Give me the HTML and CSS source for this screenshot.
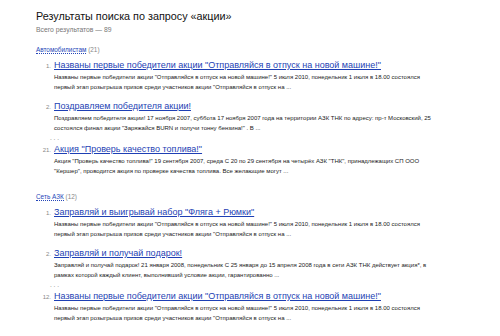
FILE: index.html
```html
<!DOCTYPE html>
<html lang="ru">

<head>
  <meta charset="UTF-8">
  <meta name="viewport" content="width=device-width, initial-scale=1.0">
  <title>Результаты поиска</title>
  <link rel="stylesheet" href="styles.css">
</head>

<body>
  <div class="search-page">
    <h1>Результаты поиска по запросу «акции»</h1>
    <p class="total">Всего результатов — 89</p>

    <div class="section">
      <div class="section-head"><a href="#">Автомобилистам</a> <span class="count">(21)</span></div>
      <ol class="results">
        <li class="result">
          <span class="num">1.</span>
          <div class="body">
            <a class="result-title" href="#">Названы первые победители акции "Отправляйся в отпуск на новой машине!"</a>
            <p class="snippet">Названы первые победители акции "Отправляйся в отпуск на новой машине!" 5 июля 2010, понедельник 1 июля в 18.00 состоялся первый этап розыгрыша призов среди участников акции "Отправляйся в отпуск на ...</p>
          </div>
        </li>
        <li class="result">
          <span class="num">2.</span>
          <div class="body">
            <a class="result-title" href="#">Поздравляем победителя акции!</a>
            <p class="snippet">Поздравляем победителя акции! 17 ноября 2007, суббота 17 ноября 2007 года на территории АЗК ТНК по адресу: пр-т Московский, 25 состоялся финал акции "Заряжайся BURN и получи тонну бензина!" . В ...</p>
          </div>
        </li>
        <li class="gap">. . .</li>
        <li class="result">
          <span class="num">21.</span>
          <div class="body">
            <a class="result-title" href="#">Акция "Проверь качество топлива!"</a>
            <p class="snippet">Акция "Проверь качество топлива!" 19 сентября 2007, среда С 20 по 29 сентября на четырёх АЗК "ТНК", принадлежащих СП ООО "Кершер", проводится акция по проверке качества топлива. Все желающие могут ...</p>
          </div>
        </li>
      </ol>
    </div>

    <div class="section">
      <div class="section-head"><a href="#">Сеть АЗК</a> <span class="count">(12)</span></div>
      <ol class="results">
        <li class="result">
          <span class="num">1.</span>
          <div class="body">
            <a class="result-title" href="#">Заправляй и выигрывай набор "Фляга + Рюмки"</a>
            <p class="snippet">Названы первые победители акции "Отправляйся в отпуск на новой машине!" 5 июля 2010, понедельник 1 июля в 18.00 состоялся первый этап розыгрыша призов среди участников акции "Отправляйся в отпуск на ...</p>
          </div>
        </li>
        <li class="result">
          <span class="num">2.</span>
          <div class="body">
            <a class="result-title" href="#">Заправляй и получай подарок!</a>
            <p class="snippet">Заправляй и получай подарок! 21 января 2008, понедельник С 25 января до 15 апреля 2008 года в сети АЗК ТНК действует акция*, в рамках которой каждый клиент, выполнивший условие акции, гарантированно ...</p>
          </div>
        </li>
        <li class="gap">. . .</li>
        <li class="result">
          <span class="num">12.</span>
          <div class="body">
            <a class="result-title" href="#">Названы первые победители акции "Отправляйся в отпуск на новой машине!"</a>
            <p class="snippet">Названы первые победители акции "Отправляйся в отпуск на новой машине!" 5 июля 2010, понедельник 1 июля в 18.00 состоялся первый этап розыгрыша призов среди участников акции "Отправляйся в отпуск на ...</p>
          </div>
        </li>
      </ol>
    </div>
  </div>
</body>

</html>
```

FILE: styles.css
```css
body {
  margin: 0;
  background: #fff;
  font-family: "Liberation Sans", Arial, sans-serif;
  color: #222;
}

.search-page {
  padding: 7px 0 0 36px;
}

h1 {
  font-size: 10.8px;
  font-weight: normal;
  line-height: 18px;
  margin: 0;
  color: #111;
}

.total {
  font-size: 6.8px;
  line-height: 10px;
  margin: 0;
  color: #777;
}

.section {
  margin-top: 10px;
}

.section + .section {
  margin-top: 16px;
}

.section-head {
  font-size: 6.4px;
  line-height: 10px;
}

.section-head a {
  color: #2546b8;
  text-decoration: none;
  border-bottom: 1px dotted #2546b8;
}

.count {
  color: #888;
}

.results {
  list-style: none;
  margin: 3px 0 0;
  padding: 0;
}

.result {
  display: grid;
  grid-template-columns: 15px 1fr;
  column-gap: 3px;
  align-items: baseline;
}

.result + .result {
  margin-top: 7px;
}

.num {
  font-size: 6px;
  line-height: 14px;
  color: #888;
  text-align: right;
}

.result-title {
  display: block;
  font-size: 9px;
  line-height: 14px;
  color: #1e3fb4;
  text-decoration: underline;
}

.snippet {
  font-size: 6px;
  line-height: 10px;
  margin: 0;
  max-width: 381px;
  color: #222;
}

.gap {
  font-size: 6.5px;
  line-height: 9px;
  color: #888;
  padding-left: 14px;
}
```
